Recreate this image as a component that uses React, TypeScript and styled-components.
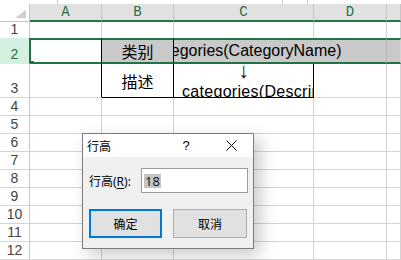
import styled, { createGlobalStyle } from "styled-components";

const GREEN = "#217346";
const GRID = "#d4d4d4";
const HEAD_LINE = "#c6c6c6";
const COLS = "30px 72px 72px 140px 73px 1fr";

const GlobalStyle = createGlobalStyle`
  html, body {
    margin: 0;
    padding: 0;
    background: #fff;
    overflow: hidden;
  }
  body {
    font-family: "Liberation Sans", "Noto Sans CJK SC", sans-serif;
  }
`;

const Sheet = styled.div`
  position: relative;
  width: 401px;
  height: 260px;
  overflow: hidden;
  background: #fff;
`;

// bottom edge of the formula bar, only a few pixels show
const FormulaEdge = styled.div`
  display: grid;
  grid-template-columns: 58px 225px 25px 1fr;
  height: 4px;
  div {
    border-right: 1px solid ${HEAD_LINE};
  }
  div:last-child {
    border-right: none;
  }
`;

const Row = styled.div<{ $h: number }>`
  display: grid;
  grid-template-columns: ${COLS};
  height: ${({ $h }) => $h}px;
`;

const Corner = styled.div`
  background: #fff;
  border-right: 1px solid ${HEAD_LINE};
  border-bottom: 1px solid ${HEAD_LINE};
  display: flex;
  align-items: flex-end;
  justify-content: flex-end;
`;

const CornerMark = styled.span`
  width: 0;
  height: 0;
  border-left: 11px solid transparent;
  border-bottom: 8px solid #cfcfcf;
  margin: 0 3px 3px 0;
`;

const ColHead = styled.div`
  background: #e1e1e1;
  border-right: 1px solid ${HEAD_LINE};
  border-bottom: 2px solid ${GREEN};
  color: ${GREEN};
  font-family: "Liberation Mono", monospace;
  font-size: 14px;
  display: flex;
  align-items: center;
  justify-content: center;
`;

const RowHead = styled.div<{ $active?: boolean }>`
  background: ${({ $active }) => ($active ? "#d3f0e0" : "#fff")};
  color: ${({ $active }) => ($active ? GREEN : "#444")};
  border-right: 1px solid ${({ $active }) => ($active ? GREEN : HEAD_LINE)};
  border-bottom: 1px solid ${({ $active }) => ($active ? "#d3f0e0" : GRID)};
  font-family: "Liberation Sans", sans-serif;
  font-size: 14px;
  line-height: 1;
  display: flex;
  align-items: flex-end;
  justify-content: center;
  padding-bottom: 2px;
  box-sizing: border-box;
`;

const Cell = styled.div<{
  $sel?: boolean;
  $first?: boolean;
  $fill?: boolean;
  $r?: string;
  $b?: string;
  $span?: number;
  $start?: boolean;
}>`
  position: relative;
  grid-column: span ${({ $span }) => $span ?? 1};
  box-sizing: border-box;
  background: ${({ $fill }) => ($fill ? "#c9c9c9" : "#fff")};
  border-right: 1px solid ${({ $r }) => $r ?? GRID};
  border-top: ${({ $sel }) => ($sel ? `2px solid ${GREEN}` : "none")};
  border-bottom: ${({ $sel, $b }) =>
    $sel ? `2px solid ${GREEN}` : `1px solid ${$b ?? GRID}`};
  border-left: ${({ $first }) => ($first ? `1px solid ${GREEN}` : "none")};
  display: flex;
  align-items: center;
  justify-content: ${({ $start }) => ($start ? "flex-start" : "center")};
  overflow: hidden;
  font-size: 16px;
  color: #000;
  white-space: nowrap;
`;

// text of C2 spills past the cell; centred on column C, clipped on the left
const Overflowing = styled.div`
  width: 140px;
  flex: none;
  display: flex;
  justify-content: center;
  align-self: stretch;
  align-items: center;
  padding-left: 3px;
  box-sizing: border-box;
`;

const Wrapped = styled.div`
  flex: 1;
  min-width: 0;
  align-self: stretch;
  display: flex;
  flex-direction: column;
  justify-content: center;
  line-height: 21px;
`;

const WrapLine = styled.span<{ $center?: boolean }>`
  display: block;
  flex: none;
  height: 21px;
  text-align: ${({ $center }) => ($center ? "center" : "left")};
  padding-left: ${({ $center }) => ($center ? 0 : 8)}px;
  letter-spacing: ${({ $center }) => ($center ? 0 : 0.3)}px;
  font-size: ${({ $center }) => ($center ? 21 : 16)}px;
`;

const FillHandle = styled.span`
  position: absolute;
  left: -2px;
  bottom: -4px;
  width: 5px;
  height: 5px;
  background: ${GREEN};
  border-top: 1px solid #fff;
  border-right: 1px solid #fff;
  z-index: 2;
`;

const Dialog = styled.div`
  position: absolute;
  left: 82px;
  top: 133px;
  width: 172px;
  height: 116px;
  box-sizing: border-box;
  border: 1px solid #7d7d7d;
  background: #f0f0f0;
  box-shadow: 6px 6px 16px rgba(0, 0, 0, 0.22);
  display: flex;
  flex-direction: column;
  font-family: "Noto Sans", "Noto Sans CJK SC", sans-serif;
  font-size: 12px;
  color: #000;
`;

const TitleBar = styled.div`
  height: 23px;
  background: #fff;
  display: flex;
  align-items: center;
  padding-left: 4px;
  padding-right: 7px;
`;

const Title = styled.span`
  flex: 1;
  font-family: "Noto Sans CJK SC", sans-serif;
  font-size: 12px;
`;

const Help = styled.span`
  width: 24px;
  margin-right: 18px;
  text-align: center;
  font-family: "Liberation Sans", sans-serif;
  font-size: 13px;
`;

const Close = styled.span`
  width: 30px;
  display: flex;
  justify-content: center;
`;

const Body = styled.div`
  flex: 1;
  padding: 11px 5px 0 6px;
  display: flex;
  flex-direction: column;
`;

const Field = styled.div`
  display: flex;
  align-items: center;
  justify-content: space-between;
  height: 25px;
`;

const Label = styled.span`
  font-family: "Noto Sans", "Noto Sans CJK SC", sans-serif;
  font-size: 12px;
  u {
    text-underline-offset: 2px;
  }
`;

const Input = styled.div`
  width: 107px;
  height: 25px;
  box-sizing: border-box;
  border: 1px solid #9c9c9c;
  background: #fff;
  display: flex;
  align-items: center;
  padding-left: 2px;
`;

const Selected = styled.span`
  background: #c4c4c4;
  color: #1a1a1a;
  font-family: "Noto Sans", sans-serif;
  font-size: 13px;
  line-height: 14px;
  padding: 0 1px;
`;

const Buttons = styled.div`
  display: flex;
  gap: 11px;
  margin-top: 16px;
`;

const Button = styled.div<{ $default?: boolean }>`
  width: ${({ $default }) => ($default ? 73 : 74)}px;
  height: 29px;
  box-sizing: border-box;
  background: #e1e1e1;
  border: ${({ $default }) =>
    $default ? "2px solid #0078d7" : "1px solid #adadad"};
  display: flex;
  align-items: center;
  justify-content: center;
  font-family: "Noto Sans CJK SC", sans-serif;
  font-size: 12px;
`;

const plainRows = [4, 5, 6, 7, 8, 9, 10, 11, 12];

const App = () => {
  return (
    <Sheet>
      <GlobalStyle />
      <FormulaEdge>
        <div />
        <div />
        <div />
        <div />
      </FormulaEdge>

      <Row $h={18}>
        <Corner>
          <CornerMark />
        </Corner>
        {["A", "B", "C", "D", ""].map((c, i) => (
          <ColHead key={i}>{c}</ColHead>
        ))}
      </Row>

      <Row $h={16}>
        <RowHead>1</RowHead>
        <Cell $b="#fff" />
        <Cell $b="#fff" />
        <Cell $b="#fff" />
        <Cell $b="#fff" />
        <Cell $b="#fff" />
      </Row>

      <Row $h={26}>
        <RowHead $active>2</RowHead>
        <Cell $sel $first $r="#000">
          <FillHandle />
        </Cell>
        <Cell $sel $fill $r="#000">
          类别
        </Cell>
        <Cell $sel $fill $start $span={2} $r="#b4b4b4">
          <Overflowing>categories(CategoryName)</Overflowing>
        </Cell>
        <Cell $sel $fill />
      </Row>

      <Row $h={34}>
        <RowHead>3</RowHead>
        <Cell $r="#000" />
        <Cell $r="#000" $b="#000">
          描述
        </Cell>
        <Cell $r="#000" $b="#000" $start>
          <Wrapped>
            <WrapLine $center>↓</WrapLine>
            <WrapLine>categories(Description)</WrapLine>
          </Wrapped>
        </Cell>
        <Cell />
        <Cell />
      </Row>

      {plainRows.map((n) => (
        <Row key={n} $h={18}>
          <RowHead>{n}</RowHead>
          <Cell />
          <Cell />
          <Cell />
          <Cell />
          <Cell />
        </Row>
      ))}

      <Dialog>
        <TitleBar>
          <Title>行高</Title>
          <Help>?</Help>
          <Close>
            <svg width="11" height="11" viewBox="0 0 11 11">
              <path d="M0.5 0.5L10.5 10.5M10.5 0.5L0.5 10.5" stroke="#000" strokeWidth="1" fill="none" />
            </svg>
          </Close>
        </TitleBar>
        <Body>
          <Field>
            <Label>
              行高(<u>R</u>):
            </Label>
            <Input>
              <Selected>18</Selected>
            </Input>
          </Field>
          <Buttons>
            <Button $default>确定</Button>
            <Button>取消</Button>
          </Buttons>
        </Body>
      </Dialog>
    </Sheet>
  );
};

export default App;
